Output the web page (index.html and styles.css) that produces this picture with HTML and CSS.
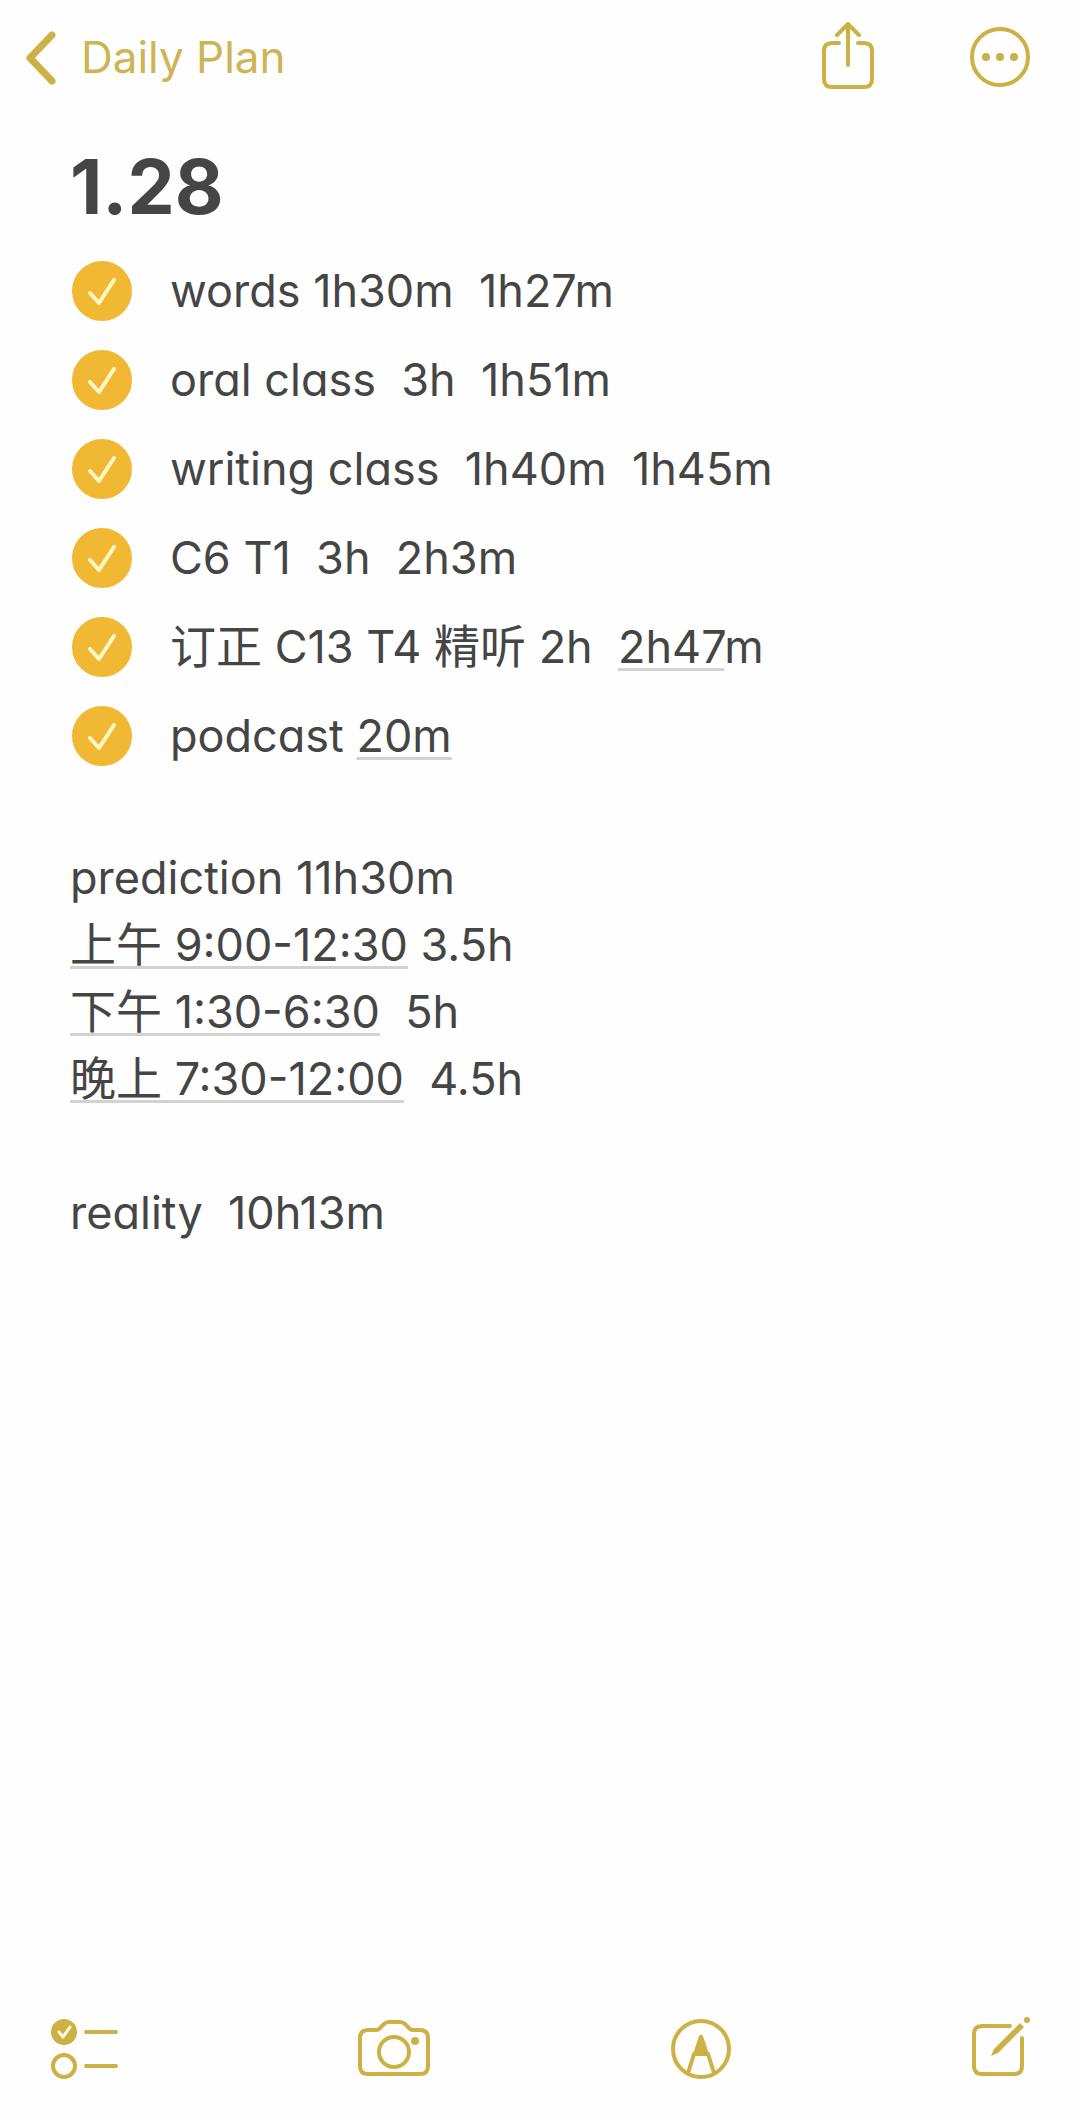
FILE: index.html
```html
<!DOCTYPE html>
<html lang="en">
<head>
    <meta charset="UTF-8">
    <meta name="viewport" content="width=device-width, initial-scale=1.0">
    <title>Daily Plan</title>
    <link rel="stylesheet" href="styles.css">
</head>
<body>

<!-- Check mark shared by the list -->
<svg class="defs" aria-hidden="true">
    <symbol id="check" viewBox="0 0 60 60">
        <path d="M18 32 L27 42 L42 19" />
    </symbol>
</svg>

<header class="navbar">
    <a class="back" href="#">
        <svg width="34" height="56" viewBox="0 0 34 56"><path class="thick" d="M28 6 L6 29 L28 52" /></svg>
        <span>Daily Plan</span>
    </a>
    <div class="nav-actions">
        <button type="button" class="icon-btn" aria-label="Share">
            <svg width="54" height="70" viewBox="0 0 54 70">
                <path d="M18 21 H11 Q3 21 3 29 V57 Q3 65 11 65 H43 Q51 65 51 57 V29 Q51 21 43 21 H37" />
                <path d="M27 43 V2 M16 13 L27 2 L38 13" />
            </svg>
        </button>
        <button type="button" class="icon-btn" aria-label="More">
            <svg width="60" height="62" viewBox="0 0 60 62">
                <circle cx="30" cy="31" r="28" />
                <g class="solid"><circle cx="16" cy="31" r="4" /><circle cx="30" cy="31" r="4" /><circle cx="44" cy="31" r="4" /></g>
            </svg>
        </button>
    </div>
</header>

<main class="note">
    <h1>1.28</h1>

    <ul class="tasks">
        <li>
            <label class="task">
                <span class="tick"><input type="checkbox" checked><svg><use href="#check" /></svg></span>
                <span class="text">words 1h30m  1h27m</span>
            </label>
        </li>
        <li>
            <label class="task">
                <span class="tick"><input type="checkbox" checked><svg><use href="#check" /></svg></span>
                <span class="text">oral class  3h  1h51m</span>
            </label>
        </li>
        <li>
            <label class="task">
                <span class="tick"><input type="checkbox" checked><svg><use href="#check" /></svg></span>
                <span class="text">writing class  1h40m  1h45m</span>
            </label>
        </li>
        <li>
            <label class="task">
                <span class="tick"><input type="checkbox" checked><svg><use href="#check" /></svg></span>
                <span class="text">C6 T1  3h  2h3m</span>
            </label>
        </li>
        <li>
            <label class="task">
                <span class="tick"><input type="checkbox" checked><svg><use href="#check" /></svg></span>
                <span class="text"><span lang="zh">订正</span> C13 T4 <span lang="zh">精听</span> 2h  <u>2h47</u>m</span>
            </label>
        </li>
        <li>
            <label class="task">
                <span class="tick"><input type="checkbox" checked><svg><use href="#check" /></svg></span>
                <span class="text">podcast <u>20m</u></span>
            </label>
        </li>
    </ul>

    <section class="lines">
        <p>prediction 11h30m</p>
        <p><u><span lang="zh">上午</span> 9:00-12:30</u> 3.5h</p>
        <p><u><span lang="zh">下午</span> 1:30-6:30</u>  5h</p>
        <p><u><span lang="zh">晚上</span> 7:30-12:00</u>  4.5h</p>
    </section>

    <section class="lines">
        <p>reality  10h13m</p>
    </section>
</main>

<footer class="toolbar">
    <button type="button" class="icon-btn" aria-label="Checklist">
        <svg width="68" height="64" viewBox="0 0 68 64">
            <circle class="solid" cx="14" cy="16" r="13" />
            <path class="mark" d="M9 16 L13 21 L20 11" />
            <circle cx="14" cy="50" r="11" />
            <path d="M36 16 H66 M36 50 H66" />
        </svg>
    </button>
    <button type="button" class="icon-btn" aria-label="Camera">
        <svg width="72" height="64" viewBox="0 0 72 64">
            <path d="M10 14 H18 Q21 14 23 11 L26 8 Q28 6 31 6 H42 Q45 6 47 8 L50 11 Q52 14 55 14 H62 Q70 14 70 22 V50 Q70 58 62 58 H10 Q2 58 2 50 V22 Q2 14 10 14 Z" />
            <circle cx="36" cy="36" r="15" />
            <circle class="solid" cx="57" cy="25" r="4" />
        </svg>
    </button>
    <button type="button" class="icon-btn" aria-label="Markup">
        <svg width="60" height="64" viewBox="0 0 60 64">
            <circle cx="30" cy="33" r="28" />
            <path d="M23 38 L17 57 M37 38 L43 57 M23 38 H37" />
            <path class="solid" d="M28 20 Q30 17 32 20 L38 38 H22 Z" />
        </svg>
    </button>
    <button type="button" class="icon-btn" aria-label="New note">
        <svg width="60" height="64" viewBox="0 0 60 64">
            <path d="M39 10 H11 Q3 10 3 18 V50 Q3 58 11 58 H43 Q51 58 51 50 V22" />
            <path class="solid" d="M20 40 L23 33 L49 7 L53 11 L27 37 Z" />
            <circle class="solid" cx="56" cy="4" r="3" />
        </svg>
    </button>
</footer>

</body>
</html>
```
FILE: styles.css
```css
/* Global Styles */
* {
    box-sizing: border-box;
}

body {
    margin: 0;
    min-height: 100vh;
    display: flex;
    flex-direction: column;
    background: #fefefe;
    color: #454545;
    font-family: Inter, "Noto Sans CJK SC", sans-serif;
    font-size: 45px;
    line-height: 67px;
}

.defs {
    position: absolute;
    width: 0;
    height: 0;
}

svg {
    display: block;
    fill: none;
    stroke: #cdb145;
    stroke-width: 4px;
    stroke-linecap: round;
    stroke-linejoin: round;
}

.thick {
    stroke-width: 7px;
}

.solid {
    fill: #cdb145;
    stroke: none;
}

.mark {
    stroke: #fffbe0;
    stroke-width: 3px;
}

/* Top Bar */
.navbar {
    display: flex;
    justify-content: space-between;
    align-items: center;
    padding: 22px 50px 22px 24px;
}

.back {
    display: flex;
    align-items: center;
    gap: 23px;
    color: #cdb556;
    font-size: 44px;
    text-decoration: none;
}

.nav-actions {
    display: flex;
    align-items: center;
    gap: 95px;
}

.icon-btn {
    padding: 0;
    border: none;
    background: none;
    cursor: pointer;
}

/* Note */
.note {
    flex: 1;
    padding: 0 70px;
    font-feature-settings: "cv11";
}

h1 {
    margin: 25px 0 11px;
    font-size: 75px;
    line-height: 96px;
}

/* Check List */
.tasks {
    margin: 0 0 64px;
    padding: 0;
    list-style: none;
}

.task {
    display: flex;
    align-items: center;
    gap: 38px;
    min-height: 89px;
    padding-left: 2px;
}

.tick {
    display: grid;
    width: 60px;
    height: 60px;
}

.tick input,
.tick svg {
    grid-area: 1 / 1;
    width: 60px;
    height: 60px;
    margin: 0;
}

.tick input {
    appearance: none;
    border: 3px solid #f1b834;
    border-radius: 50%;
}

.tick input:checked {
    background: #f1b834;
}

.tick svg {
    stroke: #fff7c4;
    pointer-events: none;
}

.text,
.lines p {
    margin: 0;
    white-space: pre-wrap;
}

[lang="zh"] {
    font-size: 46px;
    line-height: 1;
}

u {
    text-decoration: underline 3px #d2d2d2;
    text-underline-offset: 5px;
    text-decoration-skip-ink: none;
}

.lines {
    margin-bottom: 67px;
}

/* Bottom Bar */
.toolbar {
    display: flex;
    justify-content: space-between;
    align-items: center;
    padding: 0 49px 38px 50px;
}
```
